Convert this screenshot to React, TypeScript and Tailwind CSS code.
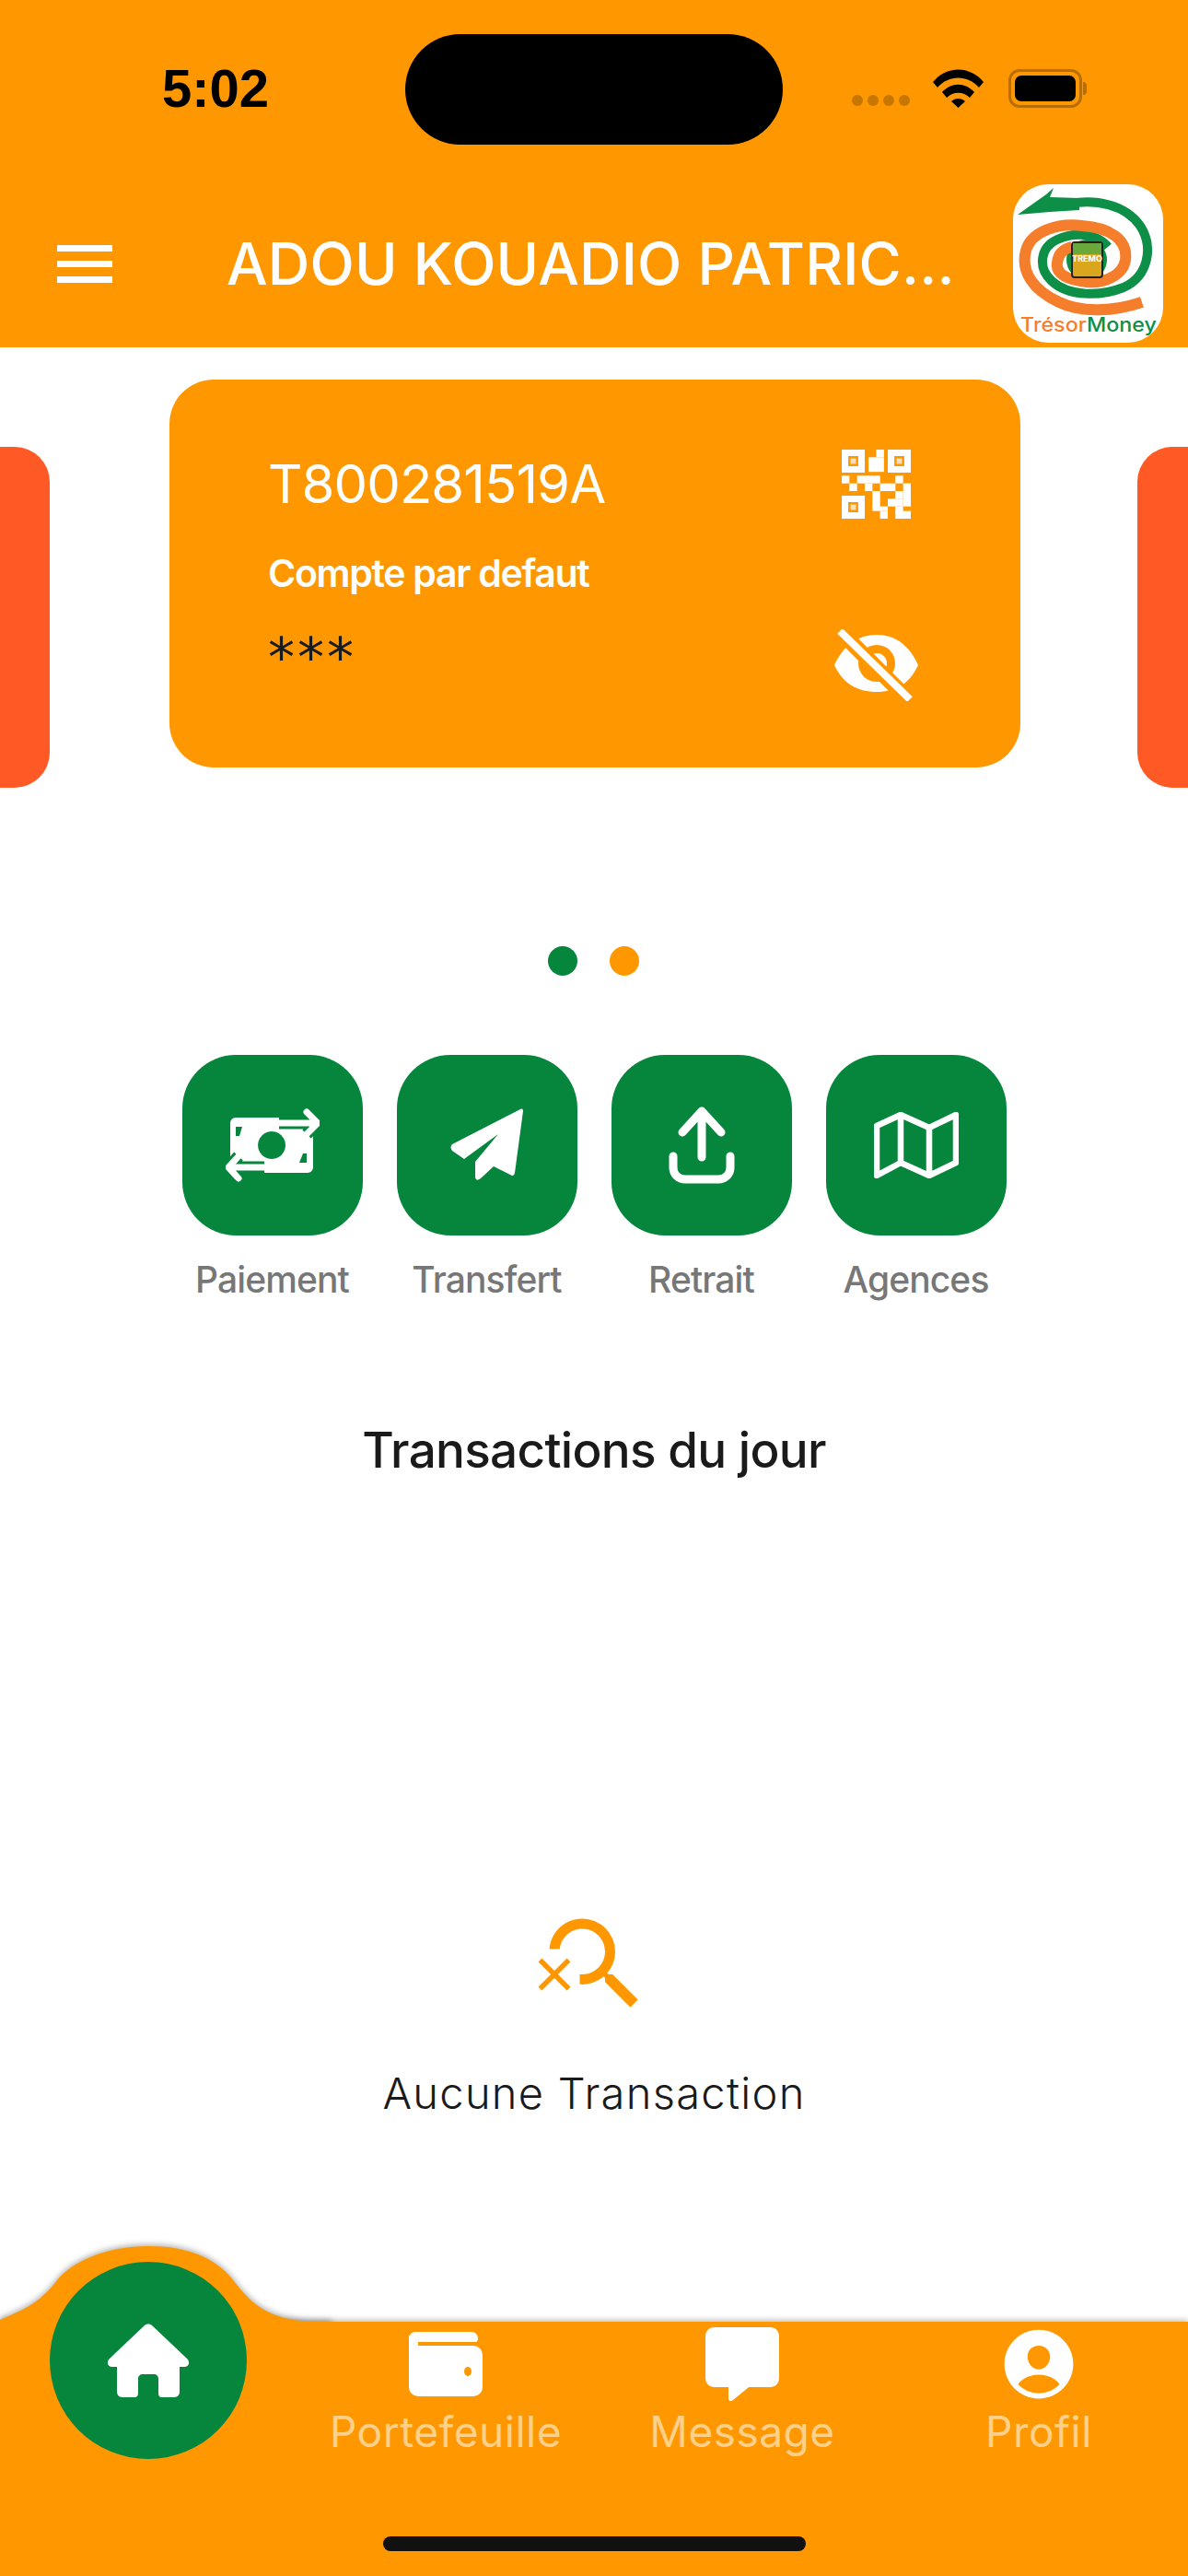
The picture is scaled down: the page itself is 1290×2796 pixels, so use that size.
import React from 'react';
import { IoPersonCircle } from 'react-icons/io5';
import { MdSearchOff } from 'react-icons/md';

const Logo: React.FC = () => (
  <div className="w-[163px] h-[172px] bg-white rounded-[38px] overflow-hidden">
    <svg width="163" height="172" viewBox="0 0 163 172">
      <circle cx="80" cy="82" r="22" fill="#0d8f47" />
      <path d="M5 33L36 11L44 4L40 14L72 15L72 28L40 30Z" fill="#0d8f47" />
      <path d="M62 21C90 16 122 22 138 45C153 68 147 100 120 112C95 122 60 122 42 105C26 90 30 68 48 60C65 52 90 52 103 68" fill="none" stroke="#0d8f47" strokeWidth="10" />
      <path d="M140 128C110 138 75 140 50 128C22 115 8 95 14 72C20 50 50 42 75 45C105 47 125 60 122 82C120 98 100 108 80 106C60 104 46 98 48 85C49 75 55 70 64 68" fill="none" stroke="#f47e2c" strokeWidth="12" />
      <rect x="64" y="63" width="33" height="38" rx="3" fill="#d9a61e" stroke="#222" strokeWidth="2" />
      <rect x="65" y="64" width="31" height="12" fill="#6aa83c" />
      <text x="80.500" y="84" textAnchor="middle" fontSize="9" fontWeight="700" fill="#fff" fontFamily="Inter, sans-serif">TREMO</text>
      <text x="8" y="160" fontSize="21" fontWeight="500" fontFamily="Inter, sans-serif" textLength="148" lengthAdjust="spacingAndGlyphs">
        <tspan fill="#f47e2c">Trésor</tspan>
        <tspan fill="#0d8f47">Money</tspan>
      </text>
    </svg>
  </div>
);

const QR_CELLS: number[][] = [
  [4.5, 0, 1, 1], [3.5, 1, 2, 1.9],
  [0, 3.4, 1, 1], [2, 3.4, 3, 1], [7, 3.4, 1, 1],
  [1, 4.4, 1, 1], [3, 4.4, 1, 1], [5, 4.4, 2, 1], [8, 4.4, 1, 3],
  [4, 5.4, 1, 2.2], [7, 5.4, 1, 1], [6, 6.4, 2, 1],
  [7, 7.4, 1, 1], [4, 7.4, 2, 0.6], [5, 8, 1, 1], [7, 8, 2, 1],
];

const QrIcon: React.FC = () => (
  <svg width="75" height="75" viewBox="0 0 9 9" fill="#fff">
    {[[0, 0], [6, 0], [0, 6]].map(([x, y]) => (
      <g key={`${x}-${y}`}>
        <path fillRule="evenodd" d={`M${x} ${y}h3v3h-3zM${x + 0.85} ${y + 0.85}v1.3h1.3v-1.3z`} />
        <rect x={x + 1.15} y={y + 1.15} width="0.7" height="0.7" opacity="0.7" />
      </g>
    ))}
    {QR_CELLS.map(([x, y, w, h]) => (
      <rect key={`${x}-${y}`} x={x} y={y} width={w} height={h} />
    ))}
  </svg>
);

const EyeOffIcon: React.FC = () => (
  <svg width="91" height="78" viewBox="0 0 91 78">
    <path d="M0 39C10 17 26 6 46 6C66 6 81 17 91 39C81 60 66 68 46 68C26 68 10 60 0 39Z" fill="#fff" />
    <circle cx="46" cy="37" r="20" fill="#ff9800" />
    <circle cx="46" cy="37" r="11" fill="#fff" />
    <path d="M4 0L80 76" stroke="#ff9800" strokeWidth="17" />
    <path d="M6 2L82 76" stroke="#fff" strokeWidth="8" />
  </svg>
);

const PayIcon: React.FC = () => (
  <svg width="102" height="80" viewBox="0 0 102 80">
    <path fillRule="evenodd" fill="#fff" d="M11 10h78a6 6 0 0 1 6 6v48a6 6 0 0 1-6 6H11a6 6 0 0 1-6-6V16a6 6 0 0 1 6-6zM50 25a15 15 0 1 0 .1 0zM11 20v10h4l3-10zM88 49h-4l-4 10h8z" />
    <path d="M58 16h40M88 4l12 12-12 12" fill="none" stroke="#05863c" strokeWidth="13" />
    <path d="M58 16h40M88 4l12 12-12 12" fill="none" stroke="#fff" strokeWidth="7" strokeLinecap="round" strokeLinejoin="round" />
    <path d="M42 64H4M14 52L3 64l11 12" fill="none" stroke="#05863c" strokeWidth="13" />
    <path d="M42 64H4M14 52L3 64l11 12" fill="none" stroke="#fff" strokeWidth="7" strokeLinecap="round" strokeLinejoin="round" />
  </svg>
);

const SendIcon: React.FC = () => (
  <svg width="80" height="80" viewBox="0 0 80 80" fill="#fff">
    <path d="M75 1.500Q79-1 79 3L70 70Q69 75 65 72L47 63L33 76Q28 80 27 75L27 58L52 28L15 55L2 46Q-1 42 2 39Z" />
  </svg>
);

const UploadIcon: React.FC = () => (
  <svg width="72" height="84" viewBox="0 0 72 84" fill="none" stroke="#fff" strokeWidth="9" strokeLinecap="round" strokeLinejoin="round">
    <path d="M36 55V5M15 28L36 5l21 23" />
    <path d="M5 54v12c0 8 6 13 13 13h36c7 0 13-5 13-13V54" />
  </svg>
);

const MapIcon: React.FC = () => (
  <svg width="92" height="72" viewBox="0 0 92 72" fill="none" stroke="#fff" strokeWidth="6.500" strokeLinejoin="round">
    <path d="M3 15L29 3l31 14L89 3v52L60 69 29 55 3 69ZM29 3v52M60 17v52" />
  </svg>
);

const HomeIcon: React.FC = () => (
  <svg width="90" height="80" viewBox="0 0 90 80" fill="#fff">
    <path d="M41 2c2-2 6-2 8 0l38 36c4 4 2 9-3 9h-5v27c0 3-2 6-6 6H60c-3 0-4-2-4-5V60c0-3-2-5-5-5H39c-3 0-5 2-5 5v15c0 3-1 5-4 5H17c-4 0-6-3-6-6V47H6c-5 0-7-5-3-9Z" />
  </svg>
);

const WalletIcon: React.FC = () => (
  <svg width="80" height="70" viewBox="0 0 80 70" fill="#fff">
    <rect x="0" y="0" width="75" height="14" rx="7" />
    <rect x="0" y="4" width="20" height="40" />
    <rect x="0" y="15" width="80" height="55" rx="10" />
    <rect x="10" y="11" width="70" height="4" fill="#ff9800" />
    <ellipse cx="64" cy="43" rx="4" ry="5" fill="#ff9800" />
  </svg>
);

const ChatIcon: React.FC = () => (
  <svg width="80" height="80" viewBox="0 0 80 80" fill="#fff">
    <path d="M10 0h60c6 0 10 4 10 10v45c0 6-4 10-10 10H47L30 79c-3 2-5 1-5-2V65H10C4 65 0 61 0 55V10C0 4 4 0 10 0Z" />
  </svg>
);

const WifiIcon: React.FC = () => (
  <svg width="55" height="42" viewBox="0 0 55 42" fill="#000">
    <path d="M0 14C15-4 40-4 55 14l-5 6C38 6 17 6 5 20Z" />
    <path d="M10 25c10-11 25-11 35 0l-5 6c-7-7-18-7-25 0Z" />
    <path d="M20 35c4-4 11-4 15 0l-7.500 7Z" />
  </svg>
);

const QuickAction: React.FC<{ label: string; children: React.ReactNode }> = ({ label, children }) => (
  <div className="w-[196px] flex flex-col items-center">
    <div className="w-[196px] h-[196px] rounded-[58px] bg-[#05863c] flex items-center justify-center">
      {children}
    </div>
    <span className="mt-[26px] text-[39px] leading-[44px] font-medium tracking-[-0.9px] text-[#777777] whitespace-nowrap">{label}</span>
  </div>
);

const NavItem: React.FC<{ label: string; children: React.ReactNode }> = ({ label, children }) => (
  <div className="w-[322px] flex flex-col items-center">
    <div className="h-[82px] flex items-center justify-center">{children}</div>
    <span className="mt-[4px] text-[46px] leading-[56px] tracking-[0.5px] text-[#ffd08a] whitespace-nowrap">{label}</span>
  </div>
);

const App: React.FC = () => {
  return (
    <div className="w-[1290px] h-[2796px] bg-white flex flex-col overflow-hidden font-['Inter',sans-serif]">
      <header className="h-[377px] shrink-0 bg-[#ff9800] flex flex-col">
        <div className="h-[194px] shrink-0 flex pt-[37px]">
          <div className="w-[440px] shrink-0 pl-[176px] pt-[31px] text-[58px] leading-[56px] font-semibold text-black font-['Liberation_Sans',sans-serif]">5:02</div>
          <div className="w-[410px] h-[120px] shrink-0 bg-black rounded-[60px]" />
          <div className="ml-[75px] flex items-start pt-[38px]">
            <div className="flex gap-[5px] mt-[28px]">
              <div className="w-[12px] h-[12px] rounded-full bg-[#c77700]" />
              <div className="w-[12px] h-[12px] rounded-full bg-[#c77700]" />
              <div className="w-[12px] h-[12px] rounded-full bg-[#c77700]" />
              <div className="w-[12px] h-[12px] rounded-full bg-[#c77700]" />
            </div>
            <div className="ml-[25px]"><WifiIcon /></div>
            <div className="ml-[27px] w-[80px] h-[42px] rounded-[12px] border-[3px] border-[#b86e00] p-[4px]">
              <div className="w-full h-full rounded-[7px] bg-black" />
            </div>
            <div className="w-[4px] h-[14px] mt-[14px] ml-[1px] rounded-r bg-[#b86e00]" />
          </div>
        </div>
        <div className="flex-1 flex items-start">
          <div className="w-[60px] ml-[62px] mt-[72px] flex flex-col gap-[10px]">
            <div className="h-[7px] bg-white" />
            <div className="h-[7px] bg-white" />
            <div className="h-[7px] bg-white" />
          </div>
          <h1 className="ml-[124px] mt-[61px] w-[796px] text-[63px] leading-[62px] font-medium tracking-[0.2px] text-white whitespace-nowrap">ADOU KOUADIO PATRIC...</h1>
          <div className="ml-[58px] mt-[6px]"><Logo /></div>
        </div>
      </header>

      <section className="mt-[35px] h-[421px] shrink-0 flex items-start">
        <div className="w-[54px] h-[370px] mt-[73px] bg-[#ff5a26] rounded-r-[38px]" />
        <div className="ml-[130px] w-[924px] h-[421px] rounded-[48px] bg-[#ff9800] flex justify-between pl-[107px] pr-[111px]">
          <div className="flex flex-col pt-[78px]">
            <span className="text-[58px] leading-[70px] text-white tracking-[-0.9px]">T800281519A</span>
            <span className="mt-[39px] text-[41px] leading-[46px] font-semibold tracking-[-1.3px] text-white">Compte par defaut</span>
            <span className="mt-[34px] text-[58px] leading-[70px] text-[#1a1a1a] font-['DejaVu_Sans',sans-serif] tracking-[3px]">***</span>
          </div>
          <div className="flex flex-col items-center pt-[76px]">
            <QrIcon />
            <div className="mt-[120px]"><EyeOffIcon /></div>
          </div>
        </div>
        <div className="ml-auto w-[55px] h-[370px] mt-[73px] bg-[#ff5a26] rounded-l-[38px]" />
      </section>

      <div className="mt-[194px] flex justify-center gap-[35px] pr-[2px]">
        <div className="w-[32px] h-[32px] rounded-full bg-[#05863c]" />
        <div className="w-[32px] h-[32px] rounded-full bg-[#ff9800]" />
      </div>

      <div className="mt-[86px] flex justify-center gap-[37px]">
        <QuickAction label="Paiement"><PayIcon /></QuickAction>
        <QuickAction label="Transfert"><SendIcon /></QuickAction>
        <QuickAction label="Retrait"><UploadIcon /></QuickAction>
        <QuickAction label="Agences"><MapIcon /></QuickAction>
      </div>

      <h2 className="mt-[133px] text-center text-[53px] leading-[60px] font-medium tracking-[-0.7px] text-[#1a1a1a]">Transactions du jour</h2>

      <div className="mt-[462px] flex flex-col items-center">
        <MdSearchOff className="w-[132px] h-[132px] text-[#ff9800] ml-[2px]" />
        <span className="mt-[46px] text-[47px] leading-[56px] font-light tracking-[1.3px] text-[#1a1a1a]">Aucune Transaction</span>
      </div>

      <nav className="relative mt-auto h-[276px] shrink-0 bg-[#ff9800] shadow-[0_-2px_6px_rgba(0,0,0,0.25)]">
        <svg className="absolute left-0 top-[-83px] drop-shadow-[0_-2px_3px_rgba(0,0,0,0.3)]" width="360" height="90" viewBox="0 0 360 90" fill="#ff9800">
          <path d="M0 81C26 70 44 62 62 38C78 18 115 1 161 1C205 1 232 14 250 34C268 56 285 83 345 83L360 83V90H0Z" />
        </svg>
        <div className="absolute left-0 top-0 w-[370px] h-[16px] bg-[#ff9800]" />
        <div className="relative flex pt-[5px] pl-[323px]">
          <div className="absolute left-[54px] top-[-65px] w-[214px] h-[214px] rounded-full bg-[#05863c] flex items-center justify-center">
            <HomeIcon />
          </div>
          <NavItem label="Portefeuille"><WalletIcon /></NavItem>
          <NavItem label="Message"><ChatIcon /></NavItem>
          <NavItem label="Profil"><IoPersonCircle className="w-[92px] h-[92px] text-white" /></NavItem>
        </div>
        <div className="absolute left-[416px] top-[233px] w-[459px] h-[16px] rounded-full bg-[#111111]" />
      </nav>
    </div>
  );
};

export default App;
